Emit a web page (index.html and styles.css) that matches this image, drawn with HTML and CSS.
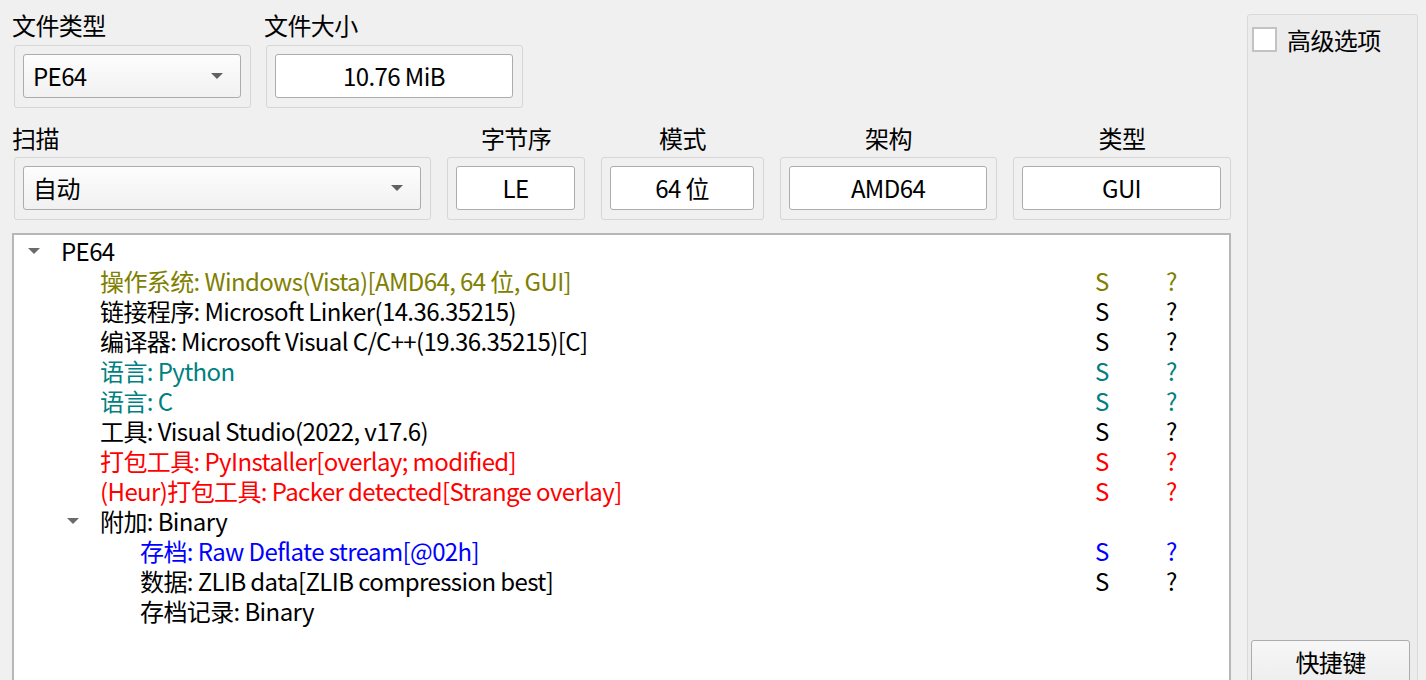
FILE: index.html
```html
<!DOCTYPE html>
<html lang="zh-CN">
<head>
<meta charset="utf-8">
<title>Detect It Easy</title>
<link rel="stylesheet" href="styles.css">
</head>
<body>
<div class="app">
  <div class="main">
    <div class="row1">
      <div class="group g-type">
        <div class="label left">文件类型</div>
        <div class="frame">
          <div class="control combo"><span>PE64</span><i class="caret"></i></div>
        </div>
      </div>
      <div class="group g-size">
        <div class="label left">文件大小</div>
        <div class="frame">
          <div class="control field">10.76 MiB</div>
        </div>
      </div>
    </div>
    <div class="row2">
      <div class="group">
        <div class="label left">扫描</div>
        <div class="frame">
          <div class="control combo"><span>自动</span><i class="caret"></i></div>
        </div>
      </div>
      <div class="group">
        <div class="label">字节序</div>
        <div class="frame"><div class="control field">LE</div></div>
      </div>
      <div class="group">
        <div class="label">模式</div>
        <div class="frame"><div class="control field">64 位</div></div>
      </div>
      <div class="group">
        <div class="label">架构</div>
        <div class="frame"><div class="control field">AMD64</div></div>
      </div>
      <div class="group">
        <div class="label">类型</div>
        <div class="frame"><div class="control field">GUI</div></div>
      </div>
    </div>
    <div class="tree">
      <div class="node lv0"><span class="tw"><i class="arrow"></i></span><span class="name">PE64</span><span></span><span></span></div>
      <div class="node lv1 olive"><span class="tw"></span><span class="name">操作系统: Windows(Vista)[AMD64, 64 位, GUI]</span><span class="s">S</span><span class="q">?</span></div>
      <div class="node lv1"><span class="tw"></span><span class="name">链接程序: Microsoft Linker(14.36.35215)</span><span class="s">S</span><span class="q">?</span></div>
      <div class="node lv1"><span class="tw"></span><span class="name">编译器: Microsoft Visual C/C++(19.36.35215)[C]</span><span class="s">S</span><span class="q">?</span></div>
      <div class="node lv1 teal"><span class="tw"></span><span class="name">语言: Python</span><span class="s">S</span><span class="q">?</span></div>
      <div class="node lv1 teal"><span class="tw"></span><span class="name">语言: C</span><span class="s">S</span><span class="q">?</span></div>
      <div class="node lv1"><span class="tw"></span><span class="name">工具: Visual Studio(2022, v17.6)</span><span class="s">S</span><span class="q">?</span></div>
      <div class="node lv1 red"><span class="tw"></span><span class="name">打包工具: PyInstaller[overlay; modified]</span><span class="s">S</span><span class="q">?</span></div>
      <div class="node lv1 red"><span class="tw"></span><span class="name">(Heur)打包工具: Packer detected[Strange overlay]</span><span class="s">S</span><span class="q">?</span></div>
      <div class="node lv1"><span class="tw"><i class="arrow"></i></span><span class="name">附加: Binary</span><span></span><span></span></div>
      <div class="node lv2 blue"><span class="tw"></span><span class="name">存档: Raw Deflate stream[@02h]</span><span class="s">S</span><span class="q">?</span></div>
      <div class="node lv2"><span class="tw"></span><span class="name">数据: ZLIB data[ZLIB compression best]</span><span class="s">S</span><span class="q">?</span></div>
      <div class="node lv2"><span class="tw"></span><span class="name">存档记录: Binary</span><span></span><span></span></div>
    </div>
  </div>
  <div class="panel">
    <label class="check"><span class="box"></span><span>高级选项</span></label>
    <div class="button">快捷键</div>
  </div>
</div>
</body>
</html>
```

FILE: styles.css
```css
html, body {
  margin: 0;
  padding: 0;
  height: 680px;
  overflow: hidden;
  background: #f0f0f0;
}
body {
  font-family: "Noto Sans CJK SC", "Noto Sans", sans-serif;
  font-size: 24px;
  line-height: 30px;
  letter-spacing: -0.6px;
  color: #000;
}
.app {
  display: flex;
  padding: 0 8px 0 12px;
}
.main {
  width: 1219px;
  padding-top: 10px;
  box-sizing: border-box;
}
.row1 {
  display: flex;
  gap: 13px;
}
.g-type { width: 239px; }
.g-size { width: 259px; }
.row1 .frame { margin-left: 2px; }
.label {
  height: 30px;
  text-align: center;
  white-space: nowrap;
}
.label.left { text-align: left; }
.frame {
  margin-top: 5px;
  border: 1px solid #d6d6d6;
  border-radius: 3px;
  padding: 8px 9px 9px 8px;
}
.row2 {
  margin-top: 15px;
  padding-left: 2px;
  display: grid;
  grid-template-columns: 417px 138px 163px 217px 1fr;
  column-gap: 16px;
}
.row2 .label.left { margin-left: -2px; }
.row2 .frame { margin-top: 4px; }
.control {
  height: 44px;
  box-sizing: border-box;
  border: 1px solid #acacac;
  border-radius: 3px;
  line-height: 42px;
  white-space: nowrap;
}
.field {
  background: #fff;
  text-align: center;
}
.combo {
  background: linear-gradient(#fdfdfd, #f1f1f1);
  display: flex;
  align-items: center;
  justify-content: space-between;
  padding: 0 17px 0 9px;
}
.caret {
  display: block;
  width: 0;
  height: 0;
  border-left: 6px solid transparent;
  border-right: 6px solid transparent;
  border-top: 6px solid #616161;
}
.tree {
  margin-top: 13px;
  height: 470px;
  background: #fff;
  border: 2px solid #b7b7b7;
  padding-top: 1px;
  box-sizing: border-box;
}
.node {
  position: relative;
  display: grid;
  grid-template-columns: 1081px 71px 1fr;
  height: 30px;
  white-space: nowrap;
}
.node .name {
  display: flex;
}
.node .name::before {
  content: "";
  width: 47px;
  flex: none;
}
.lv1 .name { padding-left: 39px; }
.lv2 .name { padding-left: 79px; }
.tw {
  display: none;
}
.lv0 .tw, .lv1 .tw {
  display: block;
  position: absolute;
  top: 12px;
  line-height: 0;
}
.lv0 .tw { left: 14px; }
.lv1 .tw { left: 53px; }
.arrow {
  display: block;
  width: 0;
  height: 0;
  border-left: 6px solid transparent;
  border-right: 6px solid transparent;
  border-top: 6px solid #6b6b6b;
}
.olive { color: #808000; }
.teal { color: #008080; }
.red { color: #ff0000; }
.blue { color: #0000ff; }
.panel {
  width: 171px;
  height: 700px;
  margin-left: 16px;
  margin-top: 14px;
  box-sizing: border-box;
  border: 1px solid #d9d9d9;
  border-radius: 3px;
  background: #ececec;
  display: flex;
  flex-direction: column;
  padding: 12px 7px 23px 4px;
}
.check {
  display: flex;
  align-items: center;
  gap: 10px;
  height: 25px;
}
.box {
  width: 25px;
  height: 25px;
  box-sizing: border-box;
  border: 2px solid #c3c3c3;
  background: #fff;
  flex: none;
}
.button {
  margin-top: auto;
  margin-left: -1px;
  height: 50px;
  box-sizing: border-box;
  border: 1px solid #acacac;
  border-radius: 3px;
  background: linear-gradient(#f7f7f7, #ececec);
  text-align: center;
  padding-top: 6px;
}
```
